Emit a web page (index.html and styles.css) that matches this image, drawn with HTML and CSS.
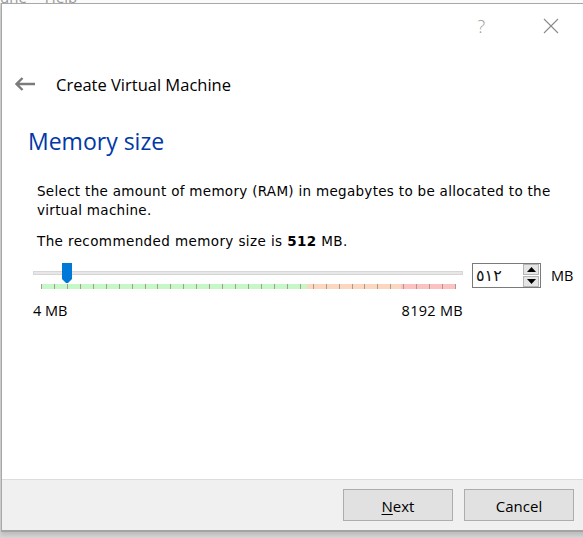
FILE: index.html
```html
<!DOCTYPE html>
<html>
<head>
<meta charset="utf-8">
<link rel="stylesheet" href="styles.css">
</head>
<body>
<div class="behind"><div class="behind-menu"><span>une</span><span>Help</span></div></div>
<div class="window">
  <div class="titlebar">
    <span class="help">?</span>
    <svg class="close" width="16" height="16" viewBox="0 0 16 16"><path d="M1 1 L15 15 M15 1 L1 15" stroke="#8a8a8a" stroke-width="1.1" fill="none"/></svg>
  </div>
  <div class="header">
    <svg class="back" width="22" height="14" viewBox="0 0 22 14"><path d="M21 7 H2.5 M8.5 1 L2.5 7 L8.5 13" stroke="#7b7b7b" stroke-width="2.4" fill="none"/></svg>
    <span class="wizard-title">Create Virtual Machine</span>
  </div>
  <div class="content">
    <h1 class="page-title">Memory size</h1>
    <p class="desc">Select the amount of memory (RAM) in megabytes to be allocated to the virtual machine.</p>
    <p class="recommend">The recommended memory size is <b>512</b> MB.</p>
    <div class="slider-row">
      <div class="slider-col">
        <div class="slider">
          <div class="track"></div>
          <svg class="handle" width="10" height="21" viewBox="0 0 10 21"><path d="M0 0 H10 V16 L6 20 H4 L0 16 Z" fill="#0078d7"/></svg>
          <div class="ticks">
            <i></i><i></i><i></i><i></i><i></i><i></i><i></i><i></i><i></i><i></i><i></i>
            <i></i><i></i><i></i><i></i><i></i><i></i><i></i><i></i><i></i><i></i><i></i>
            <i></i><i></i><i></i><i></i><i></i><i></i><i></i><i></i><i></i><i></i><i></i>
          </div>
        </div>
        <div class="range-labels"><span>4 MB</span><span>8192 MB</span></div>
      </div>
      <div class="spinbox">
        <span class="spin-value">٥١٢</span>
        <div class="spin-buttons">
          <div class="spin-btn"><svg width="9" height="5" viewBox="0 0 9 5"><path d="M0 5 L4.5 0 L9 5 Z" fill="#000"/></svg></div>
          <div class="spin-btn"><svg width="9" height="5" viewBox="0 0 9 5"><path d="M0 0 L4.5 5 L9 0 Z" fill="#000"/></svg></div>
        </div>
      </div>
      <span class="unit">MB</span>
    </div>
  </div>
  <div class="footer">
    <button class="btn"><u>N</u>ext</button>
    <button class="btn">Cancel</button>
  </div>
</div>
</body>
</html>
```
FILE: styles.css
```css
html, body {
  margin: 0;
  padding: 0;
}
body {
  width: 583px;
  height: 538px;
  overflow: hidden;
  background: #d6d6d6;
  font-family: "DejaVu Sans", sans-serif;
}
.behind {
  height: 3px;
  overflow: hidden;
  background: #fbfbfb;
}
.behind-menu {
  margin-top: -11px;
  font-family: "Open Sans", sans-serif;
  font-size: 15px;
  line-height: 16px;
  color: #9a9a9a;
  display: flex;
  gap: 18px;
}
.window {
  box-sizing: border-box;
  margin-left: 1px;
  width: 590px;
  height: 529px;
  border-left: 1px solid #a8a8a8;
  border-top: 1px solid #a8a8a8;
  border-bottom: 2px solid #a4a4a4;
  background: #fff;
  display: flex;
  flex-direction: column;
  box-shadow: 0 3px 4px rgba(0,0,0,0.12);
}
.titlebar {
  height: 44px;
  display: flex;
  align-items: center;
  justify-content: flex-end;
  padding-right: 32px;
}
.help {
  font-family: "Open Sans", sans-serif;
  font-size: 18px;
  font-weight: 300;
  color: #9a9a9a;
  margin-right: 58px;
  line-height: 20px;
}
.close {
  display: block;
}
.header {
  height: 72px;
  display: flex;
  align-items: center;
  padding-left: 12px;
}
.back {
  display: block;
  margin-right: 20px;
}
.wizard-title {
  font-family: "Open Sans", sans-serif;
  font-size: 16.5px;
  color: #000;
}
.content {
  flex: 1;
  padding-left: 26px;
}
.page-title {
  margin: 6px 0 0 0;
  font-family: "Open Sans", sans-serif;
  font-weight: 400;
  font-size: 23px;
  line-height: 30px;
  color: #0038a8;
}
.desc {
  margin: 26px 0 0 9px;
  width: 530px;
  font-size: 13.5px;
  letter-spacing: 0.3px;
  line-height: 19px;
  color: #000;
}
.recommend {
  margin: 12px 0 0 9px;
  font-size: 13.5px;
  letter-spacing: 0.4px;
  line-height: 19px;
  color: #000;
}
.slider-row {
  margin: 12px 0 0 5px;
  display: flex;
  align-items: flex-start;
}
.slider-col {
  width: 430px;
}
.slider {
  position: relative;
  height: 26px;
}
.track {
  position: absolute;
  left: 0;
  right: 0;
  top: 8px;
  height: 2px;
  background: #e7e7e7;
  border: 1px solid #d6d6d6;
}
.handle {
  position: absolute;
  left: 29px;
  top: 0;
}
.ticks {
  position: absolute;
  left: 8px;
  top: 21px;
  width: 415px;
  height: 5px;
  display: flex;
  justify-content: space-between;
  background: linear-gradient(to right, #c6f7c6 0, #c6f7c6 64.1%, #fdd6c0 64.1%, #fdd6c0 86.7%, #fcc2c2 86.7%, #fcc2c2 100%);
}
.ticks i {
  width: 1px;
  height: 5px;
  background: #a49c90;
}
.range-labels {
  margin-top: 12px;
  display: flex;
  justify-content: space-between;
  font-family: "Open Sans", sans-serif;
  font-size: 14.5px;
  line-height: 20px;
  color: #000;
}
.range-labels span:last-child {
  letter-spacing: 0.3px;
}
.spinbox {
  box-sizing: border-box;
  margin-left: 9px;
  width: 69px;
  height: 25px;
  border: 1px solid #7a7a7a;
  background: #fff;
  display: flex;
  align-items: center;
  justify-content: space-between;
  padding: 0 1px 0 3px;
}
.spin-value {
  font-size: 16px;
  line-height: 22px;
  letter-spacing: 1.5px;
  color: #111;
}
.spin-buttons {
  display: flex;
  flex-direction: column;
  gap: 1px;
}
.spin-btn {
  box-sizing: border-box;
  width: 16px;
  height: 11px;
  background: #e5e5e5;
  border: 1px solid #b5b5b5;
  display: flex;
  align-items: center;
  justify-content: center;
}
.spin-btn svg {
  display: block;
}
.unit {
  margin-left: 10px;
  font-family: "Open Sans", sans-serif;
  font-size: 14.5px;
  line-height: 26px;
  color: #000;
}
.footer {
  box-sizing: border-box;
  height: 51px;
  border-top: 1px solid #dcdcdc;
  background: #f0f0f0;
  display: flex;
  justify-content: flex-end;
  align-items: flex-start;
  gap: 11px;
  padding: 9px 17px 0 0;
}
.btn {
  box-sizing: border-box;
  width: 110px;
  height: 32px;
  margin: 0;
  padding: 2px 0 0 0;
  border: 1px solid #adadad;
  background: #e1e1e1;
  font-family: "Open Sans", sans-serif;
  font-size: 15px;
  color: #000;
}
.btn u {
  text-decoration-thickness: 1px;
  text-underline-offset: 2px;
}
```
